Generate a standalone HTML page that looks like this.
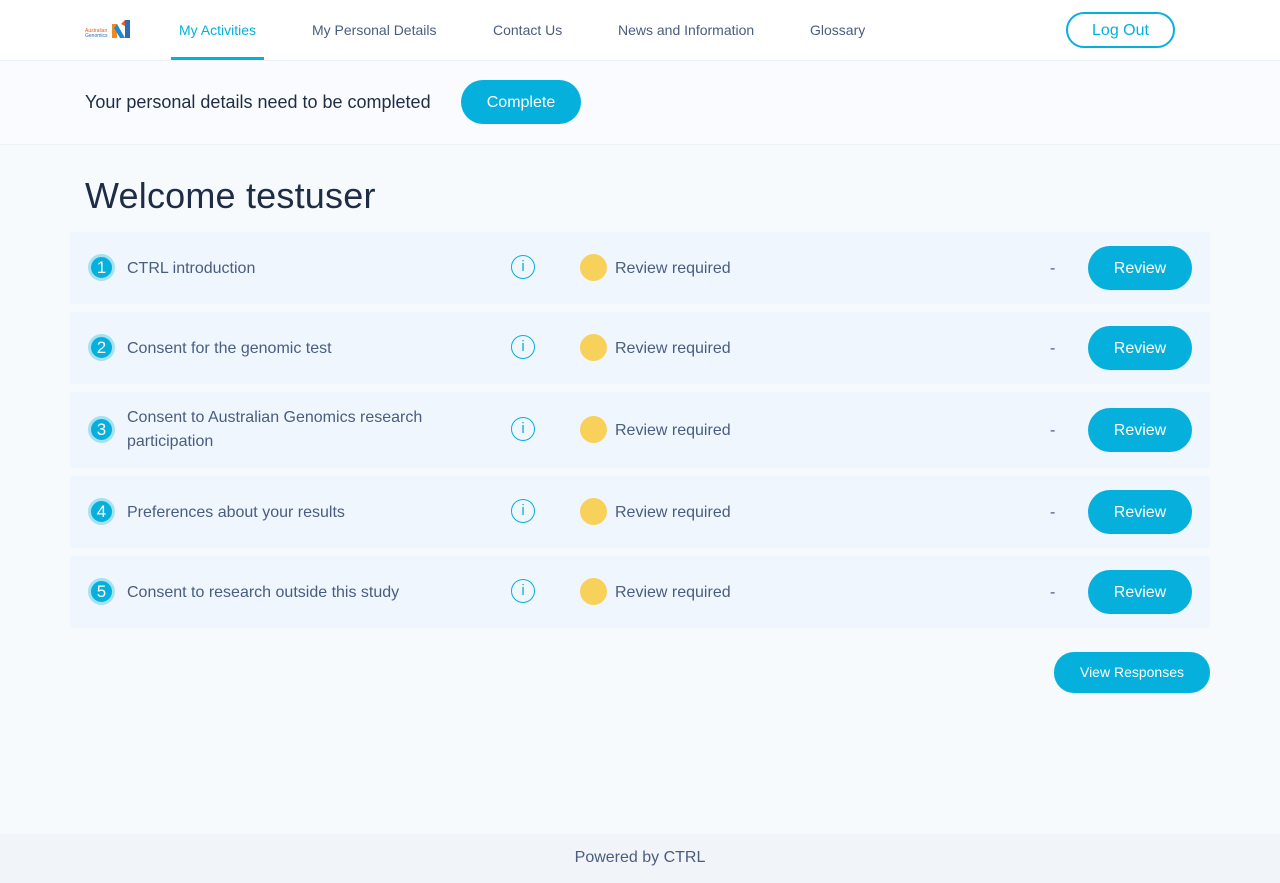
<!DOCTYPE html>
<html><head><meta charset="utf-8"><style>
*{box-sizing:border-box;margin:0;padding:0}
body{width:1280px;height:883px;background:#f7fafd;font-family:"Liberation Sans",sans-serif;color:#4a5d80;position:relative;overflow:hidden}
.nav{position:absolute;top:0;left:0;width:1280px;height:61px;background:#fff;border-bottom:1px solid #eef1f5}
.nav a{position:absolute;top:22px;font-size:14px;color:#4a5d80;text-decoration:none}
.nav a.act{color:#06b0dc}
.ul{position:absolute;left:171px;top:57px;width:93px;height:3px;background:#06b0dc}
.logout{position:absolute;left:1066px;top:12px;width:109px;height:36px;border:2px solid #06b0dc;border-radius:18px;color:#06b0dc;font-size:16px;text-align:center;line-height:34px;background:#fff}
.banner{position:absolute;top:61px;left:0;width:1280px;height:84px;background:#f9fbfe;border-bottom:1px solid #eef1f5}
.banner span{position:absolute;left:85px;top:31px;font-size:18px;color:#1e2d45}
.btn{background:#06b0dc;color:#fff;text-align:center;border-radius:22px;position:absolute}
h1{position:absolute;left:85px;top:175px;font-size:36px;font-weight:400;color:#1e2d45;letter-spacing:0.2px}
.row{position:absolute;left:70px;width:1140px;background:#eff6fe}
.num{position:absolute;left:18px;width:27px;height:27px;border-radius:50%;background:#06b0dc;border:3px solid #a6e1f1;color:#fff;font-size:17px;text-align:center;line-height:21px}
.title{position:absolute;left:57px;font-size:16px;line-height:24px;width:320px}
.info{position:absolute;left:441px;width:24px;height:24px;border:1.5px solid #06b0dc;border-radius:50%;color:#06b0dc;font-size:15px;text-align:center;line-height:21px}
.dot{position:absolute;left:510px;width:27px;height:27px;border-radius:50%;background:#f8d15a}
.st{position:absolute;left:545px;font-size:16px}
.dash{position:absolute;left:980px;font-size:16px}
.rv{left:1018px;width:104px;height:44px;line-height:46px;font-size:16px}
.foot{position:absolute;top:834px;left:0;width:1280px;height:49px;background:#f1f4f8;text-align:center;line-height:48px;font-size:16px}
</style></head><body>
<div class="nav">
<svg style="position:absolute;left:85px;top:18px" width="52" height="24"><text x="0" y="14" font-size="5" fill="#f05a28" font-family="Liberation Sans">Australian</text><text x="0" y="19" font-size="5" fill="#2a6db5" font-family="Liberation Sans">Genomics</text><path d="M27 6h5v14h-5z" fill="#f08a24"/><path d="M32 6l8 14h-5l-6-10z" fill="#1e8ad6"/><path d="M40 2h5v18h-5z" fill="#2a6db5"/><path d="M36 6l4-4v6z" fill="#f05a28"/></svg>
<a class="act" style="left:179px">My Activities</a>
<a style="left:312px">My Personal Details</a>
<a style="left:493px">Contact Us</a>
<a style="left:618px">News and Information</a>
<a style="left:810px">Glossary</a>
<div class="ul"></div>
<div class="logout">Log Out</div>
</div>
<div class="banner"><span>Your personal details need to be completed</span>
<div class="btn" style="left:461px;top:19px;width:120px;height:44px;line-height:46px;font-size:16px">Complete</div></div>
<h1>Welcome testuser</h1>

<div class="row" style="top:232px;height:72px"><div class="num" style="top:22px">1</div><div class="title" style="top:25px">CTRL introduction</div><div class="info" style="top:23px">i</div><div class="dot" style="top:22px"></div><div class="st" style="top:28px">Review required</div><div class="dash" style="top:28px">-</div><div class="btn rv" style="top:14px">Review</div></div>
<div class="row" style="top:312px;height:72px"><div class="num" style="top:22px">2</div><div class="title" style="top:25px">Consent for the genomic test</div><div class="info" style="top:23px">i</div><div class="dot" style="top:22px"></div><div class="st" style="top:28px">Review required</div><div class="dash" style="top:28px">-</div><div class="btn rv" style="top:14px">Review</div></div>
<div class="row" style="top:392px;height:76px"><div class="num" style="top:24px">3</div><div class="title" style="top:14px">Consent to Australian Genomics research participation</div><div class="info" style="top:25px">i</div><div class="dot" style="top:24px"></div><div class="st" style="top:30px">Review required</div><div class="dash" style="top:30px">-</div><div class="btn rv" style="top:16px">Review</div></div>
<div class="row" style="top:476px;height:72px"><div class="num" style="top:22px">4</div><div class="title" style="top:25px">Preferences about your results</div><div class="info" style="top:23px">i</div><div class="dot" style="top:22px"></div><div class="st" style="top:28px">Review required</div><div class="dash" style="top:28px">-</div><div class="btn rv" style="top:14px">Review</div></div>
<div class="row" style="top:556px;height:72px"><div class="num" style="top:22px">5</div><div class="title" style="top:25px">Consent to research outside this study</div><div class="info" style="top:23px">i</div><div class="dot" style="top:22px"></div><div class="st" style="top:28px">Review required</div><div class="dash" style="top:28px">-</div><div class="btn rv" style="top:14px">Review</div></div>

<div class="btn" style="left:1054px;top:652px;width:156px;height:41px;line-height:41px;font-size:14px;border-radius:20px">View Responses</div>
<div class="foot">Powered by CTRL</div>
</body></html>
